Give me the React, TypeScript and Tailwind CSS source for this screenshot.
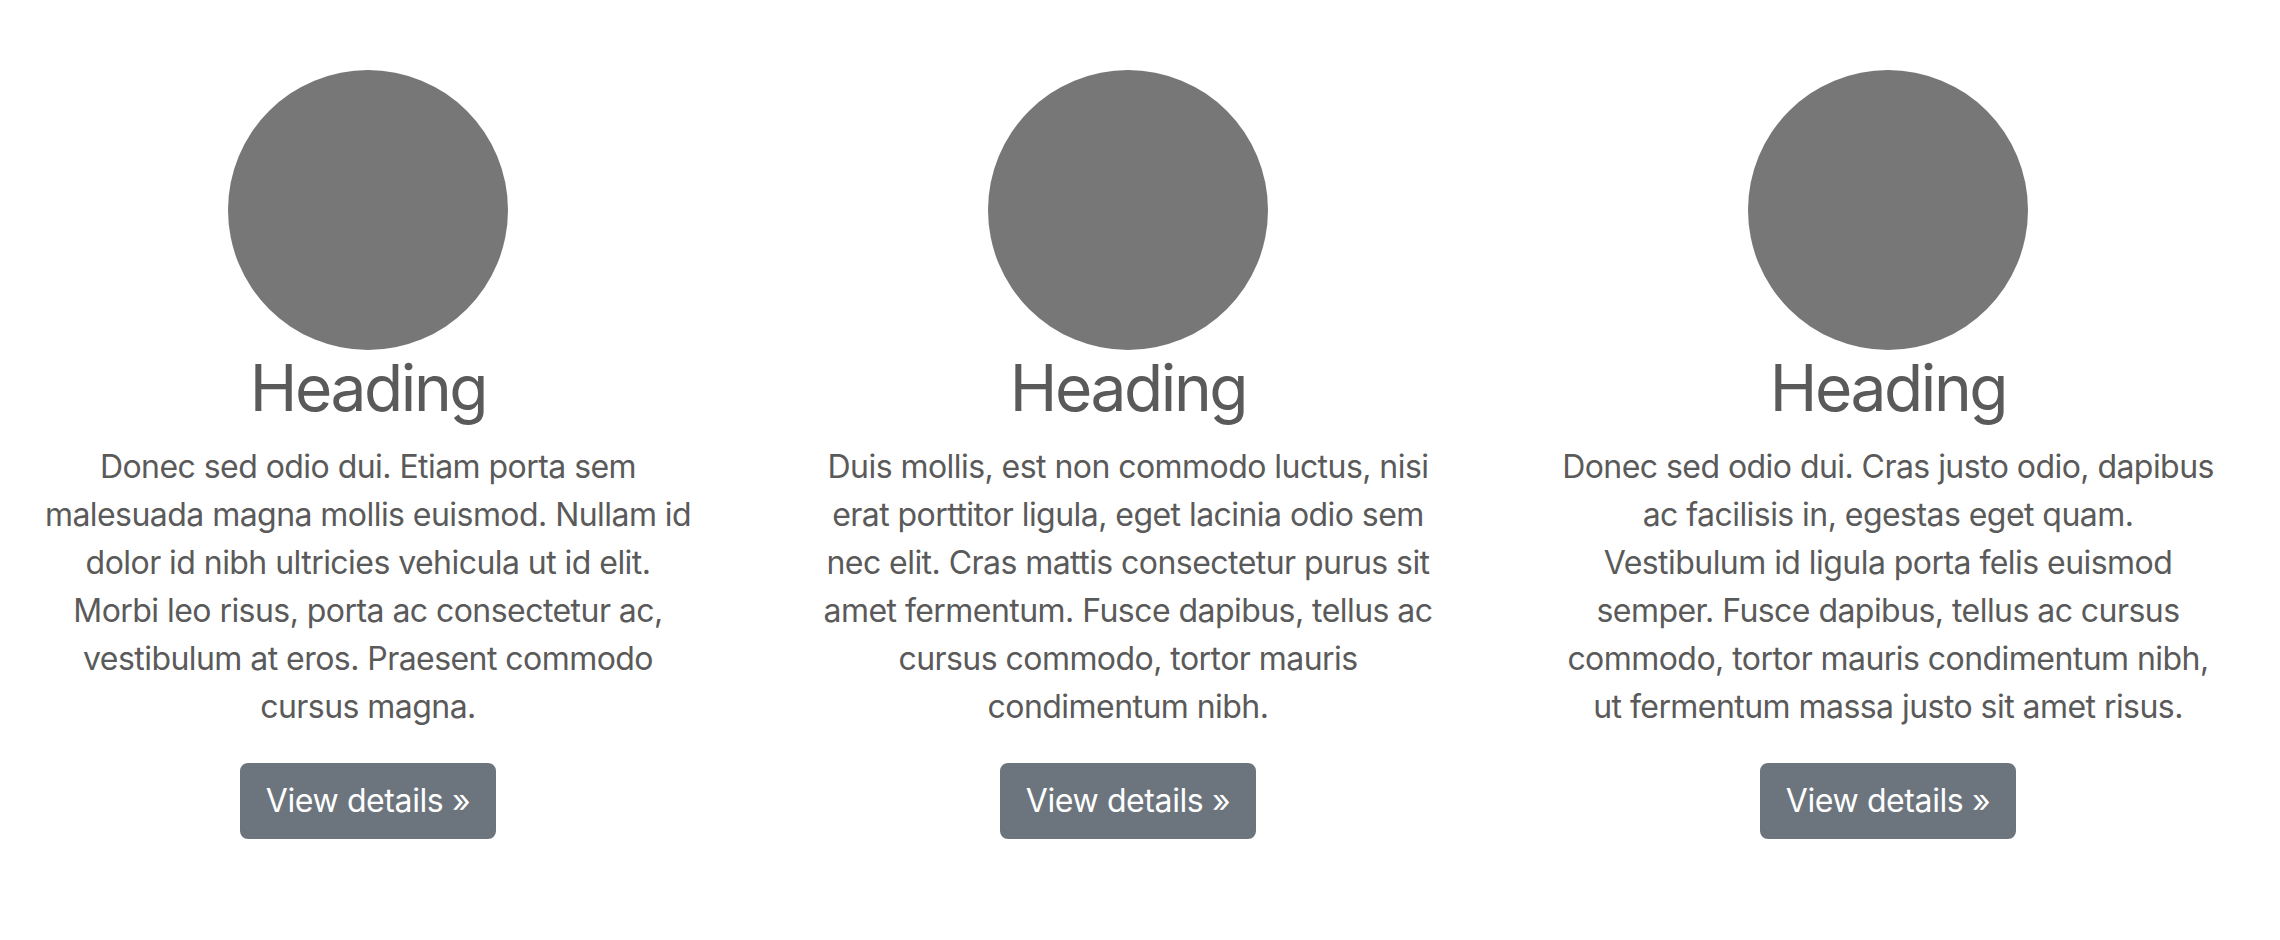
const columns = [
  {
    lines: [
      "Donec sed odio dui. Etiam porta sem",
      "malesuada magna mollis euismod. Nullam id",
      "dolor id nibh ultricies vehicula ut id elit.",
      "Morbi leo risus, porta ac consectetur ac,",
      "vestibulum at eros. Praesent commodo",
      "cursus magna.",
    ],
  },
  {
    lines: [
      "Duis mollis, est non commodo luctus, nisi",
      "erat porttitor ligula, eget lacinia odio sem",
      "nec elit. Cras mattis consectetur purus sit",
      "amet fermentum. Fusce dapibus, tellus ac",
      "cursus commodo, tortor mauris",
      "condimentum nibh.",
    ],
  },
  {
    lines: [
      "Donec sed odio dui. Cras justo odio, dapibus",
      "ac facilisis in, egestas eget quam.",
      "Vestibulum id ligula porta felis euismod",
      "semper. Fusce dapibus, tellus ac cursus",
      "commodo, tortor mauris condimentum nibh,",
      "ut fermentum massa justo sit amet risus.",
    ],
  },
];

export default function App() {
  return (
    <div
      className="w-[2280px] h-[940px] bg-white text-[#5a5a5a] overflow-hidden"
      style={{ fontFamily: "Inter, 'Noto Sans', sans-serif" }}
    >
      <div className="grid grid-cols-3 pt-[70px]">
        {columns.map((col, i) => (
          <div key={i} className="flex flex-col items-center text-center pr-[24px]">
            {/* placeholder image */}
            <div className="w-[280px] h-[280px] rounded-full bg-[#777777]" />
            <h2 className="text-[64px] leading-[1.2] font-normal mb-[16px] tracking-[-2.4px]">
              Heading
            </h2>
            <p className="text-[32px] leading-[48px] mb-[32px] whitespace-nowrap tracking-[-0.55px]">
              {col.lines.map((line, j) => (
                <span key={j} className="block">
                  {line}
                </span>
              ))}
            </p>
            <a
              href="#"
              className="inline-block bg-[#6c757d] border-2 border-[#6c757d] text-white text-[32px] leading-[48px] px-[24px] py-[12px] rounded-[8px] tracking-[-0.4px]"
            >
              View details &raquo;
            </a>
          </div>
        ))}
      </div>
    </div>
  );
}
